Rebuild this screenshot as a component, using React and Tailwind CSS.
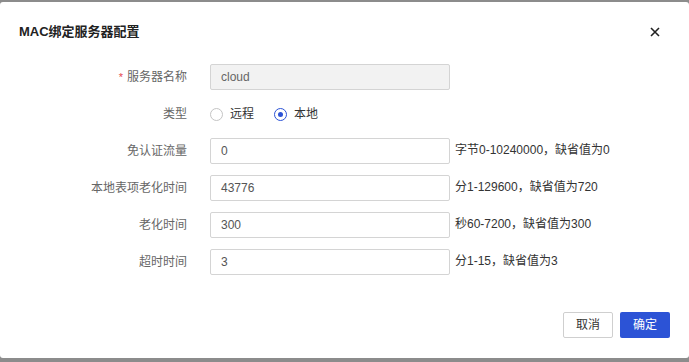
const rows = [
  { label: '免认证流量', value: '0', hint: '字节0-10240000，缺省值为0' },
  { label: '本地表项老化时间', value: '43776', hint: '分1-129600，缺省值为720' },
  { label: '老化时间', value: '300', hint: '秒60-7200，缺省值为300' },
  { label: '超时时间', value: '3', hint: '分1-15，缺省值为3' },
]

const Radio = ({ checked, label }) => (
  <label className="flex items-center gap-[7px] text-[12px] text-[#333]">
    <span
      className={
        checked
          ? 'w-[13px] h-[13px] rounded-full border border-[#2c53d6] bg-white flex items-center justify-center'
          : 'w-[13px] h-[13px] rounded-full border border-[#c4c4c4] bg-white'
      }
    >
      {checked && <span className="w-[5px] h-[5px] rounded-full bg-[#2c53d6]"></span>}
    </span>
    {label}
  </label>
)

export default function App() {
  return (
    <div
      className="h-[362px] w-[689px] bg-[#8c8c8c] pt-[2px]"
      style={{ fontFamily: '"Liberation Sans", "Noto Sans CJK SC", sans-serif' }}
    >
      <div className="h-[356px] bg-white rounded-[3px] flex flex-col">
        {/* header */}
        <div className="flex items-center justify-between pl-[19px] pr-[29px] pt-[20px] h-[40px]">
          <h1 className="text-[13px] font-bold text-[#222] leading-[16px]">MAC绑定服务器配置</h1>
          <svg width="10" height="10" viewBox="0 0 10 10" className="text-[#222]">
            <path d="M1 1L9 9M9 1L1 9" stroke="currentColor" strokeWidth="1.6" />
          </svg>
        </div>

        {/* form */}
        <div className="mt-[22px] flex flex-col gap-[11px]">
          <div className="flex items-center h-[26px]">
            <div className="w-[187px] flex justify-end items-center text-[12px] text-[#666]">
              <span className="text-[#e5484d] mr-[4px] text-[11px]">*</span>
              服务器名称
            </div>
            <div className="ml-[23px] w-[240px] h-[26px] border border-[#d4d4d4] bg-[#f2f2f2] rounded-[2px] flex items-center px-[10px] text-[12px] text-[#666]">
              cloud
            </div>
          </div>

          <div className="flex items-center h-[26px]">
            <div className="w-[187px] text-right text-[12px] text-[#666]">类型</div>
            <div className="ml-[23px] flex items-center gap-[20px]">
              <Radio label="远程" />
              <Radio checked label="本地" />
            </div>
          </div>

          {rows.map((r) => (
            <div key={r.label} className="flex items-center h-[26px]">
              <div className="w-[187px] text-right text-[12px] text-[#666]">{r.label}</div>
              <div className="ml-[23px] w-[240px] h-[26px] border border-[#d4d4d4] bg-white rounded-[2px] flex items-center px-[10px] text-[12px] text-[#555]">
                {r.value}
              </div>
              <div className="ml-[5px] -mt-[3px] text-[12px] text-[#333]">{r.hint}</div>
            </div>
          ))}
        </div>

        {/* footer */}
        <div className="mt-auto flex justify-end gap-[7px] pr-[19px] pb-[20px]">
          <button className="w-[50px] h-[26px] border border-[#cfcfcf] bg-white rounded-[2px] text-[12px] text-[#333]">
            取消
          </button>
          <button className="w-[50px] h-[26px] bg-[#2c53d6] rounded-[2px] text-[12px] text-white">
            确定
          </button>
        </div>
      </div>
    </div>
  )
}
